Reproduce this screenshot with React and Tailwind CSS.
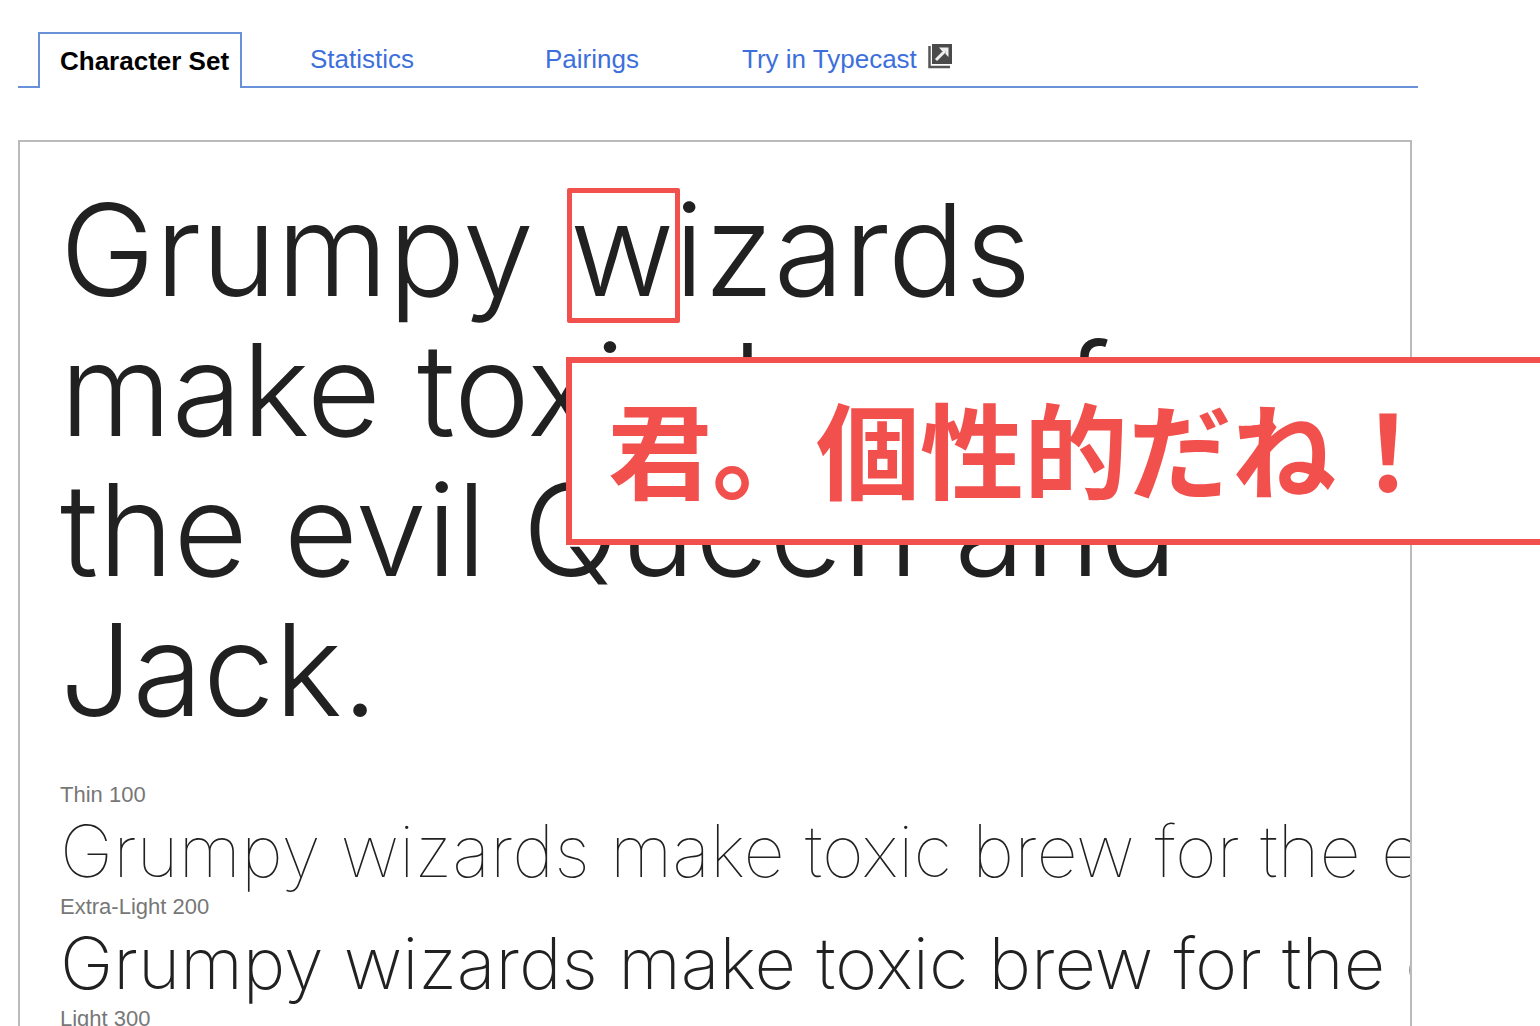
import React from 'react';

const tabs = [
  { label: 'Statistics', className: 'ml-[68px]' },
  { label: 'Pairings', className: 'ml-[131px]' },
  { label: 'Try in Typecast', className: 'ml-[103px]', external: true },
];

const lines = ['Grumpy wizards', 'make toxic brew for', 'the evil Queen and', 'Jack.'];

const samples = [
  { label: 'Thin 100', className: 'font-thin' },
  { label: 'Extra-Light 200', className: 'font-extralight' },
];

function ExternalIcon() {
  return (
    <svg width="26" height="26" viewBox="0 0 26 26" fill="none" aria-hidden="true">
      <path d="M2.500 3v21H23" stroke="#555" strokeWidth="2.500" />
      <path d="M5 1h20v20H5z" fill="#4a4a4a" />
      <path d="M9 17l9-9" stroke="#eee" strokeWidth="3" />
      <path d="M12 4.500h9.500V14l-3-3V8h-3.500z" fill="#eee" />
    </svg>
  );
}

function Tabs() {
  return (
    <nav className="flex h-14 mr-[122px] text-[26px] leading-8">
      <div className="w-5 border-b-2 border-[#6891d9]" />
      <a href="#character-set" className="w-[204px] border-2 border-b-0 border-[#6891d9] pl-5 pt-[11px] font-bold text-black whitespace-nowrap">
        Character Set
      </a>
      <div className="flex flex-1 items-start border-b-2 border-[#6891d9] pt-[11px] text-[#3c6fdc]">
        {tabs.map((tab) => (
          <a key={tab.label} href="#tab" className={`flex gap-2.5 whitespace-nowrap ${tab.className}`}>
            {tab.label}
            {tab.external && <ExternalIcon />}
          </a>
        ))}
      </div>
    </nav>
  );
}

export default function App() {
  return (
    <main className="relative flex h-screen flex-col overflow-hidden bg-white pl-[18px] pt-8 font-['Liberation_Sans',Arial,sans-serif]">
      <Tabs />

      <section className="mt-[52px] mr-32 flex-1 overflow-hidden border-2 border-b-0 border-[#bababa] pl-10 pt-[38px]">
        <h1 className="font-['Inter',sans-serif] text-[128px] leading-[140px] font-light text-[#212121] whitespace-nowrap">
          {lines.map((line) => (
            <span key={line} className="block">{line}</span>
          ))}
        </h1>

        <div className="mt-[41px]">
          {samples.map((sample) => (
            <div key={sample.label}>
              <p className="text-[22px] leading-7 text-[#777]">{sample.label}</p>
              <p className={`font-['Inter',sans-serif] text-[72px] leading-[84px] text-[#212121] whitespace-nowrap ${sample.className}`}>
                Grumpy wizards make toxic brew for the evil
              </p>
            </div>
          ))}
          <p className="text-[22px] leading-7 text-[#777]">Light 300</p>
        </div>
      </section>

      {/* annotations drawn over the specimen */}
      <div className="absolute left-[567px] top-[188px] h-[135px] w-[113px] rounded-xs border-5 border-[#f2504d]" />
      <div className="absolute left-[566px] -right-2 top-[357px] flex h-[188px] items-center border-6 border-[#f2504d] bg-white pl-9 pb-2">
        <p className="font-['Noto_Sans_CJK_JP',sans-serif] text-[104px] leading-none font-bold text-[#f2504d] whitespace-nowrap">
          君。個性的だね！
        </p>
      </div>
    </main>
  );
}
